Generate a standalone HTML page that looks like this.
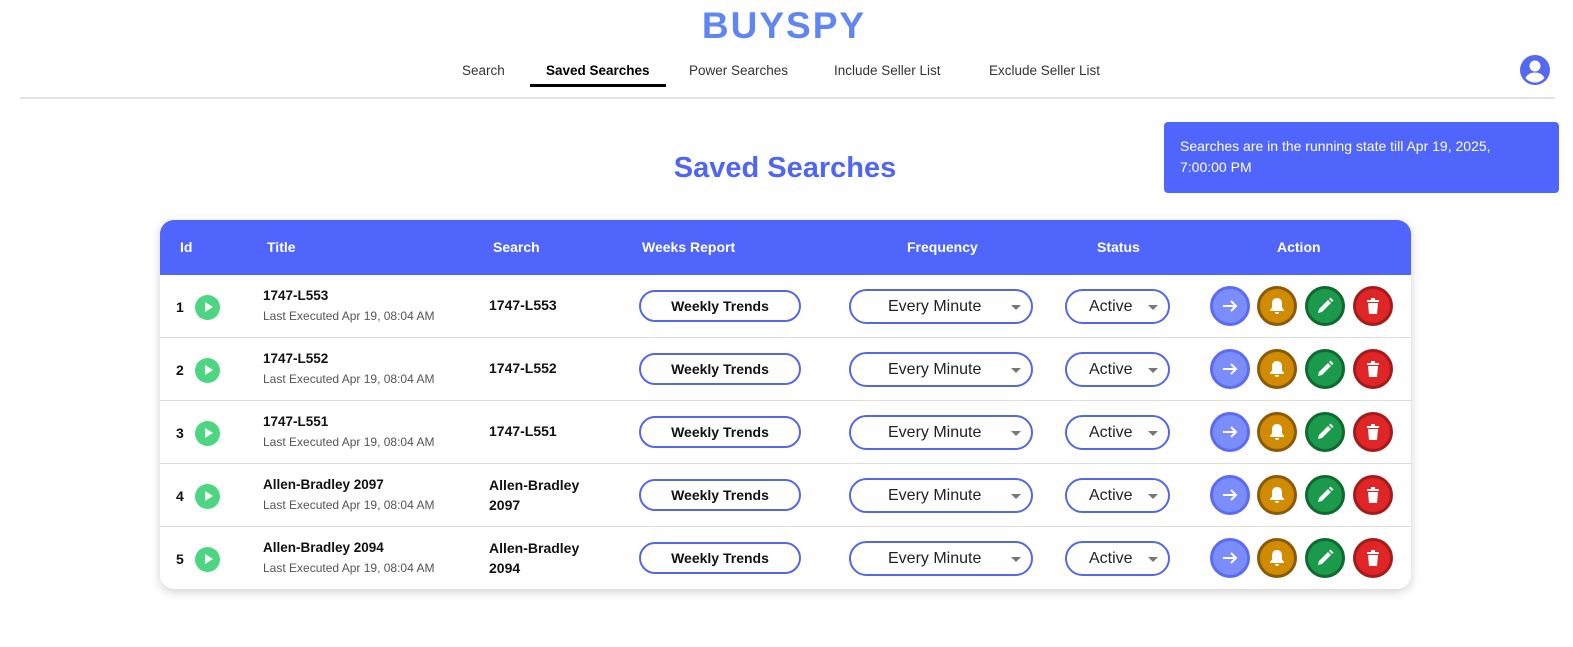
<!DOCTYPE html>
<html style="overflow:hidden"><head><style>
*{box-sizing:border-box;margin:0;padding:0}
html,body{overflow:hidden}
body{width:1573px;height:647px;background:#fff;font-family:"Liberation Sans",Arial,sans-serif;position:relative;color:#111}
.abs{position:absolute}
.logo{left:0;width:1568px;top:5px;text-align:center;font-size:37px;font-weight:bold;color:#5f86f2;letter-spacing:2px}
.nav{top:63px;font-size:13.5px;color:#333}
.hr{left:20px;width:1535px;top:97px;height:2px;background:#e3e3e3}
.toast{left:1164px;top:122px;width:395px;height:71px;background:#4f65fc;border-radius:4px;color:#fff;font-size:14px;line-height:21px;padding:14px 16px}
.h1{left:0;width:1570px;top:152px;text-align:center;font-size:29px;font-weight:bold;color:#4f65f4}
.card{left:160px;top:220px;width:1251px;height:369px;border-radius:14px;box-shadow:0 3px 10px rgba(0,0,0,.18);overflow:hidden;background:#fff}
.thead{position:absolute;left:0;top:0;width:100%;height:55px;background:#4f65fc;color:#fff;font-weight:bold;font-size:14px}
.thead span{position:absolute;top:19px}
.row{position:absolute;left:0;width:100%;height:63px;border-bottom:1px solid #ddd}
.row>*{position:absolute}
.id{left:16px;top:24px;font-size:14px;font-weight:bold}
.play{left:35px;top:20px;width:25px;height:25px;border-radius:50%;background:#4cd681}
.play:after{content:"";position:absolute;left:10px;top:7px;border-left:8px solid #fff;border-top:5.5px solid transparent;border-bottom:5.5px solid transparent}
.t1{left:103px;top:13px;font-size:13.5px;font-weight:bold;color:#111}
.t2{left:103px;top:34px;font-size:12px;color:#555}
.s{left:329px;font-size:14px;font-weight:bold;line-height:20px}
.wk{left:479px;top:15px;width:162px;height:32px;border:2px solid #5468e0;border-radius:16px;text-align:center;font-size:14px;font-weight:bold;line-height:28px}
.sel{height:35px;border:2px solid #5468e0;border-radius:18px;top:14px;font-size:16px;color:#222;line-height:31px}
.sel:after{content:"";position:absolute;right:10px;top:14px;border-top:5px solid #777;border-left:5px solid transparent;border-right:5px solid transparent}
.fr{left:689px;width:184px;padding-left:37px}
.st{left:905px;width:105px;padding-left:22px}
.c{top:11px;width:40px;height:40px;border-radius:50%;border:3px solid}
.c svg{position:absolute;left:7px;top:7px}
</style></head><body>
<div class="abs logo">BUYSPY</div>
<div class="abs nav" style="left:462px">Search</div>
<div class="abs nav" style="left:546px;font-weight:bold;color:#000">Saved Searches</div>
<div class="abs" style="left:530px;top:84px;width:136px;height:3px;background:#000"></div>
<div class="abs nav" style="left:689px">Power Searches</div>
<div class="abs nav" style="left:834px">Include Seller List</div>
<div class="abs nav" style="left:989px">Exclude Seller List</div>
<svg class="abs" style="left:1519px;top:54px" width="32" height="32" viewBox="0 0 32 32"><circle cx="16" cy="16" r="15" fill="#5468f0"/><circle cx="16" cy="12" r="5.5" fill="#fff"/><path d="M6.5 24c2-4 5.5-5.5 9.5-5.5s7.5 1.5 9.5 5.5c-2.5 3-6 4.5-9.5 4.5s-7-1.5-9.5-4.5z" fill="#fff"/></svg>
<div class="abs hr"></div>
<div class="abs toast">Searches are in the running state till Apr 19, 2025,<br>7:00:00 PM</div>
<div class="abs h1">Saved Searches</div>
<div class="abs card">
<div class="thead"><span style="left:20px">Id</span><span style="left:107px">Title</span><span style="left:333px">Search</span><span style="left:482px">Weeks Report</span><span style="left:747px">Frequency</span><span style="left:937px">Status</span><span style="left:1117px">Action</span></div>
<div id="rows"></div>
</div>
<script>
var d=[["1","1747-L553","1747-L553"],["2","1747-L552","1747-L552"],["3","1747-L551","1747-L551"],["4","Allen-Bradley 2097","Allen-Bradley<br>2097"],["5","Allen-Bradley 2094","Allen-Bradley<br>2094"]];
var h="";
d.forEach(function(r,i){
var two=r[2].indexOf("<br>")>0;
h+='<div class="row" style="top:'+(55+i*63)+'px"><div class="id">'+r[0]+'</div><div class="play"></div><div class="t1">'+r[1]+'</div><div class="t2">Last Executed Apr 19, 08:04 AM</div><div class="s" style="top:'+(two?11:20)+'px">'+r[2]+'</div><div class="wk">Weekly Trends</div><div class="sel fr">Every Minute</div><div class="sel st">Active</div>'+
'<div class="c" style="left:1050px;background:#7b8cfb;border-color:#5b6cf3"><svg width="20" height="20" viewBox="0 0 20 20"><path d="M3 10h13M11 5l5 5-5 5" stroke="#fff" stroke-width="2" fill="none"/></svg></div>'+
'<div class="c" style="left:1097px;background:#d18b00;border-color:#8b5a08"><svg width="20" height="20" viewBox="0 0 20 20"><path d="M10 2c-3.5 0-5 2.5-5 5.5v4L3 14v1h14v-1l-2-2.5v-4C15 4.5 13.5 2 10 2zM8 16a2 2 0 0 0 4 0z" fill="#fff"/></svg></div>'+
'<div class="c" style="left:1145px;background:#1b9a4b;border-color:#0f6a30"><svg width="20" height="20" viewBox="0 0 20 20"><path d="M3 17l1-4 9-9 3 3-9 9zM14 3l1.5-1.5 3 3L17 6z" fill="#fff"/></svg></div>'+
'<div class="c" style="left:1193px;background:#df2526;border-color:#a41b1b"><svg width="20" height="20" viewBox="0 0 20 20"><path d="M4 4h12v2H4zM8 2h4v2H8zM5 7h10l-1 11H6z" fill="#fff"/></svg></div></div>';
});
document.getElementById("rows").innerHTML=h;
</script>
</body></html>
